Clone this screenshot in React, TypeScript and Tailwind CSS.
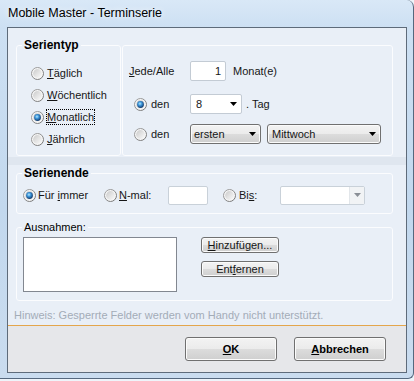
import { useId } from "react";

function Radio({ checked = false }: { checked?: boolean }) {
  const id = useId().replace(/:/g, "");
  return (
    <svg width="13" height="13" viewBox="0 0 13 13" className="shrink-0">
      <defs>
        <linearGradient id={`o${id}`} x1="0" y1="0" x2="1" y2="1">
          <stop offset="0" stopColor="#a8a8a8" />
          <stop offset="1" stopColor="#707070" />
        </linearGradient>
        <linearGradient id={`f${id}`} x1="0" y1="0" x2="1" y2="1">
          <stop offset="0" stopColor="#cbcbcb" />
          <stop offset="1" stopColor="#fbfbfb" />
        </linearGradient>
        <radialGradient id={`d${id}`} cx="0.42" cy="0.38" r="0.62">
          <stop offset="0" stopColor="#b4eaff" />
          <stop offset="0.45" stopColor="#3b93d8" />
          <stop offset="1" stopColor="#12396a" />
        </radialGradient>
      </defs>
      <circle cx="6.5" cy="6.5" r="6" fill="#f5f5f5" stroke={`url(#o${id})`} />
      <circle cx="6.5" cy="6.5" r="4.4" fill={`url(#f${id})`} />
      {checked && <circle cx="6.5" cy="6.5" r="3.4" fill={`url(#d${id})`} />}
    </svg>
  );
}

function Arrow({ color = "#000" }: { color?: string }) {
  return (
    <svg width="7" height="4" viewBox="0 0 7 4" className="shrink-0">
      <path d="M0 0h7L3.5 4z" fill={color} />
    </svg>
  );
}

function Label({ children, focus = false }: { children: React.ReactNode; focus?: boolean }) {
  return (
    <span
      className={`h-[16px] leading-[14px] border ${
        focus ? "border-dotted border-black" : "border-transparent"
      }`}
    >
      {children}
    </span>
  );
}

const btn =
  "border border-[#707070] rounded-[3px] bg-[linear-gradient(#f3f3f3_0%,#ebebeb_50%,#dcdcdc_51%,#cfcfcf_100%)] shadow-[inset_0_0_0_1px_#fbfbfb] flex items-center";

export default function App() {
  return (
    <div className="w-[414px] h-[381px] bg-[#eef4fa] font-['Liberation_Sans',Arial,sans-serif] text-[11px] leading-[13px] text-[#161616]">
      <div className="w-[414px] h-[379px] flex flex-col rounded-tr-[7px] rounded-br-[6px] border-r border-b border-[#55687e] bg-[linear-gradient(180deg,#d9e8f7_0px,#cde0f3_27px,#c2d8ee_55%,#cadcef_100%)]">
        <div className="h-[27px] flex items-center pl-[8px] text-[12.5px] text-black [text-shadow:0_0_6px_#ffffff]">
          Mobile Master - Terminserie
        </div>
        <div className="ml-[7px] w-[400px] h-[346px] border border-[#5e6b7a] flex flex-col">
          {/* Serientyp */}
          <div className="h-[129px] bg-[#e9eff7] flex items-start pl-[8px] pt-[11px] gap-[1px]">
            <fieldset className="w-[105px] h-[117px] border border-[#fbfcfe] rounded-[3px]">
              <legend className="ml-[5px] px-[2px] font-bold text-[12px] leading-[12px] text-black">
                Serientyp
              </legend>
              <div className="flex flex-col pl-[14px] pt-[11px]">
                <div className="h-[22px] flex items-center gap-[2px]">
                  <Radio />
                  <Label>
                    <u>T</u>äglich
                  </Label>
                </div>
                <div className="h-[22px] flex items-center gap-[2px]">
                  <Radio />
                  <Label>
                    <u>W</u>öchentlich
                  </Label>
                </div>
                <div className="h-[22px] flex items-center gap-[2px]">
                  <Radio checked />
                  <Label focus>
                    <u>M</u>onatlich
                  </Label>
                </div>
                <div className="h-[22px] flex items-center gap-[2px]">
                  <Radio />
                  <Label>
                    <u>J</u>ährlich
                  </Label>
                </div>
              </div>
            </fieldset>
            <div className="w-[271px] h-[111px] mt-[6px] border border-[#fbfcfe] rounded-[3px] pt-[15px]">
              <div className="h-[20px] flex items-center">
                <span className="w-[67px] pl-[6px]">
                  <u>J</u>ede/Alle
                </span>
                <div className="w-[36px] h-[20px] bg-white border border-[#c3cbd4] rounded-[2px] flex items-center justify-end pr-[4px]">
                  1
                </div>
                <span className="ml-[7px]">Monat(e)</span>
              </div>
              <div className="mt-[13px] h-[20px] flex items-center">
                <div className="w-[67px] pl-[11px] flex items-center gap-[4px]">
                  <Radio checked />
                  <span>den</span>
                </div>
                <div className="w-[52px] h-[20px] bg-white border border-[#c3cbd4] rounded-[2px] flex items-center justify-between pl-[5px] pr-[4px]">
                  <span>8</span>
                  <Arrow />
                </div>
                <span className="ml-[4px]">. Tag</span>
              </div>
              <div className="mt-[10px] h-[20px] flex items-center">
                <div className="w-[67px] pl-[11px] flex items-center gap-[4px]">
                  <Radio />
                  <span>den</span>
                </div>
                <div className={`${btn} w-[71px] h-[20px] justify-between pl-[3px] pr-[4px]`}>
                  <span>ersten</span>
                  <Arrow />
                </div>
                <div className={`${btn} ml-[6px] w-[114px] h-[20px] justify-between pl-[4px] pr-[4px]`}>
                  <span>Mittwoch</span>
                  <Arrow />
                </div>
              </div>
            </div>
          </div>
          <div className="h-[8px] bg-[#dfe6ef]" />
          {/* Serienende + Ausnahmen */}
          <div className="h-[160px] bg-[#e9eff7] flex flex-col pt-[2px]">
            <fieldset className="ml-[8px] w-[377px] h-[47px] border border-[#fbfcfe] rounded-[3px]">
              <legend className="ml-[5px] px-[2px] font-bold text-[12px] leading-[12px] text-black">
                Serienende
              </legend>
              <div className="mt-[6px] h-[20px] flex items-center pl-[6px]">
                <div className="w-[81px] flex items-center gap-[1px]">
                  <Radio checked />
                  <Label>
                    Für <u>i</u>mmer
                  </Label>
                </div>
                <div className="w-[64px] flex items-center gap-[1px]">
                  <Radio />
                  <Label>
                    <u>N</u>-mal:
                  </Label>
                </div>
                <div className="w-[40px] h-[19px] bg-white border border-[#c9d1d9] rounded-[2px]" />
                <div className="ml-[15px] w-[57px] flex items-center gap-[2px]">
                  <Radio />
                  <Label>
                    Bi<u>s</u>:
                  </Label>
                </div>
                <div className="w-[85px] h-[19px] bg-white border border-[#c9d1d9] rounded-[2px] flex justify-end">
                  <div className="w-[15px] h-full bg-[#f1f3f5] border-l border-[#e2e6ea] flex items-center justify-center">
                    <Arrow color="#8a8f96" />
                  </div>
                </div>
              </div>
            </fieldset>
            <fieldset className="ml-[8px] mt-[7px] w-[377px] h-[80px] border border-[#fbfcfe] rounded-[3px]">
              <legend className="ml-[5px] px-[2px] text-[11px] leading-[12px] text-black">
                Ausnahmen:
              </legend>
              <div className="flex pt-[4px] pl-[6px]">
                <div className="w-[154px] h-[55px] bg-white border border-[#828790]" />
                <div className="ml-[24px] flex flex-col gap-[8px]">
                  <div className={`${btn} w-[78px] h-[16px] justify-center`}>
                    <span>
                      <u>H</u>inzufügen...
                    </span>
                  </div>
                  <div className={`${btn} w-[78px] h-[16px] justify-center`}>
                    <span>
                      Ent<u>f</u>ernen
                    </span>
                  </div>
                </div>
              </div>
            </fieldset>
            <div className="mt-[8px] pl-[6px] text-[#a3acb7]">
              Hinweis: Gesperrte Felder werden vom Handy nicht unterstützt.
            </div>
          </div>
          <div className="h-[1px] bg-[#e4a64c]" />
          <div className="flex-1 bg-[#e6e7ea] flex justify-end items-start pt-[11px] pr-[20px] gap-[17px]">
            <div className={`${btn} w-[92px] h-[24px] justify-center font-bold text-black`}>
              <span>
                <u>O</u>K
              </span>
            </div>
            <div className={`${btn} w-[92px] h-[24px] justify-center font-bold text-black`}>
              <span>
                <u>A</u>bbrechen
              </span>
            </div>
          </div>
        </div>
      </div>
    </div>
  );
}
